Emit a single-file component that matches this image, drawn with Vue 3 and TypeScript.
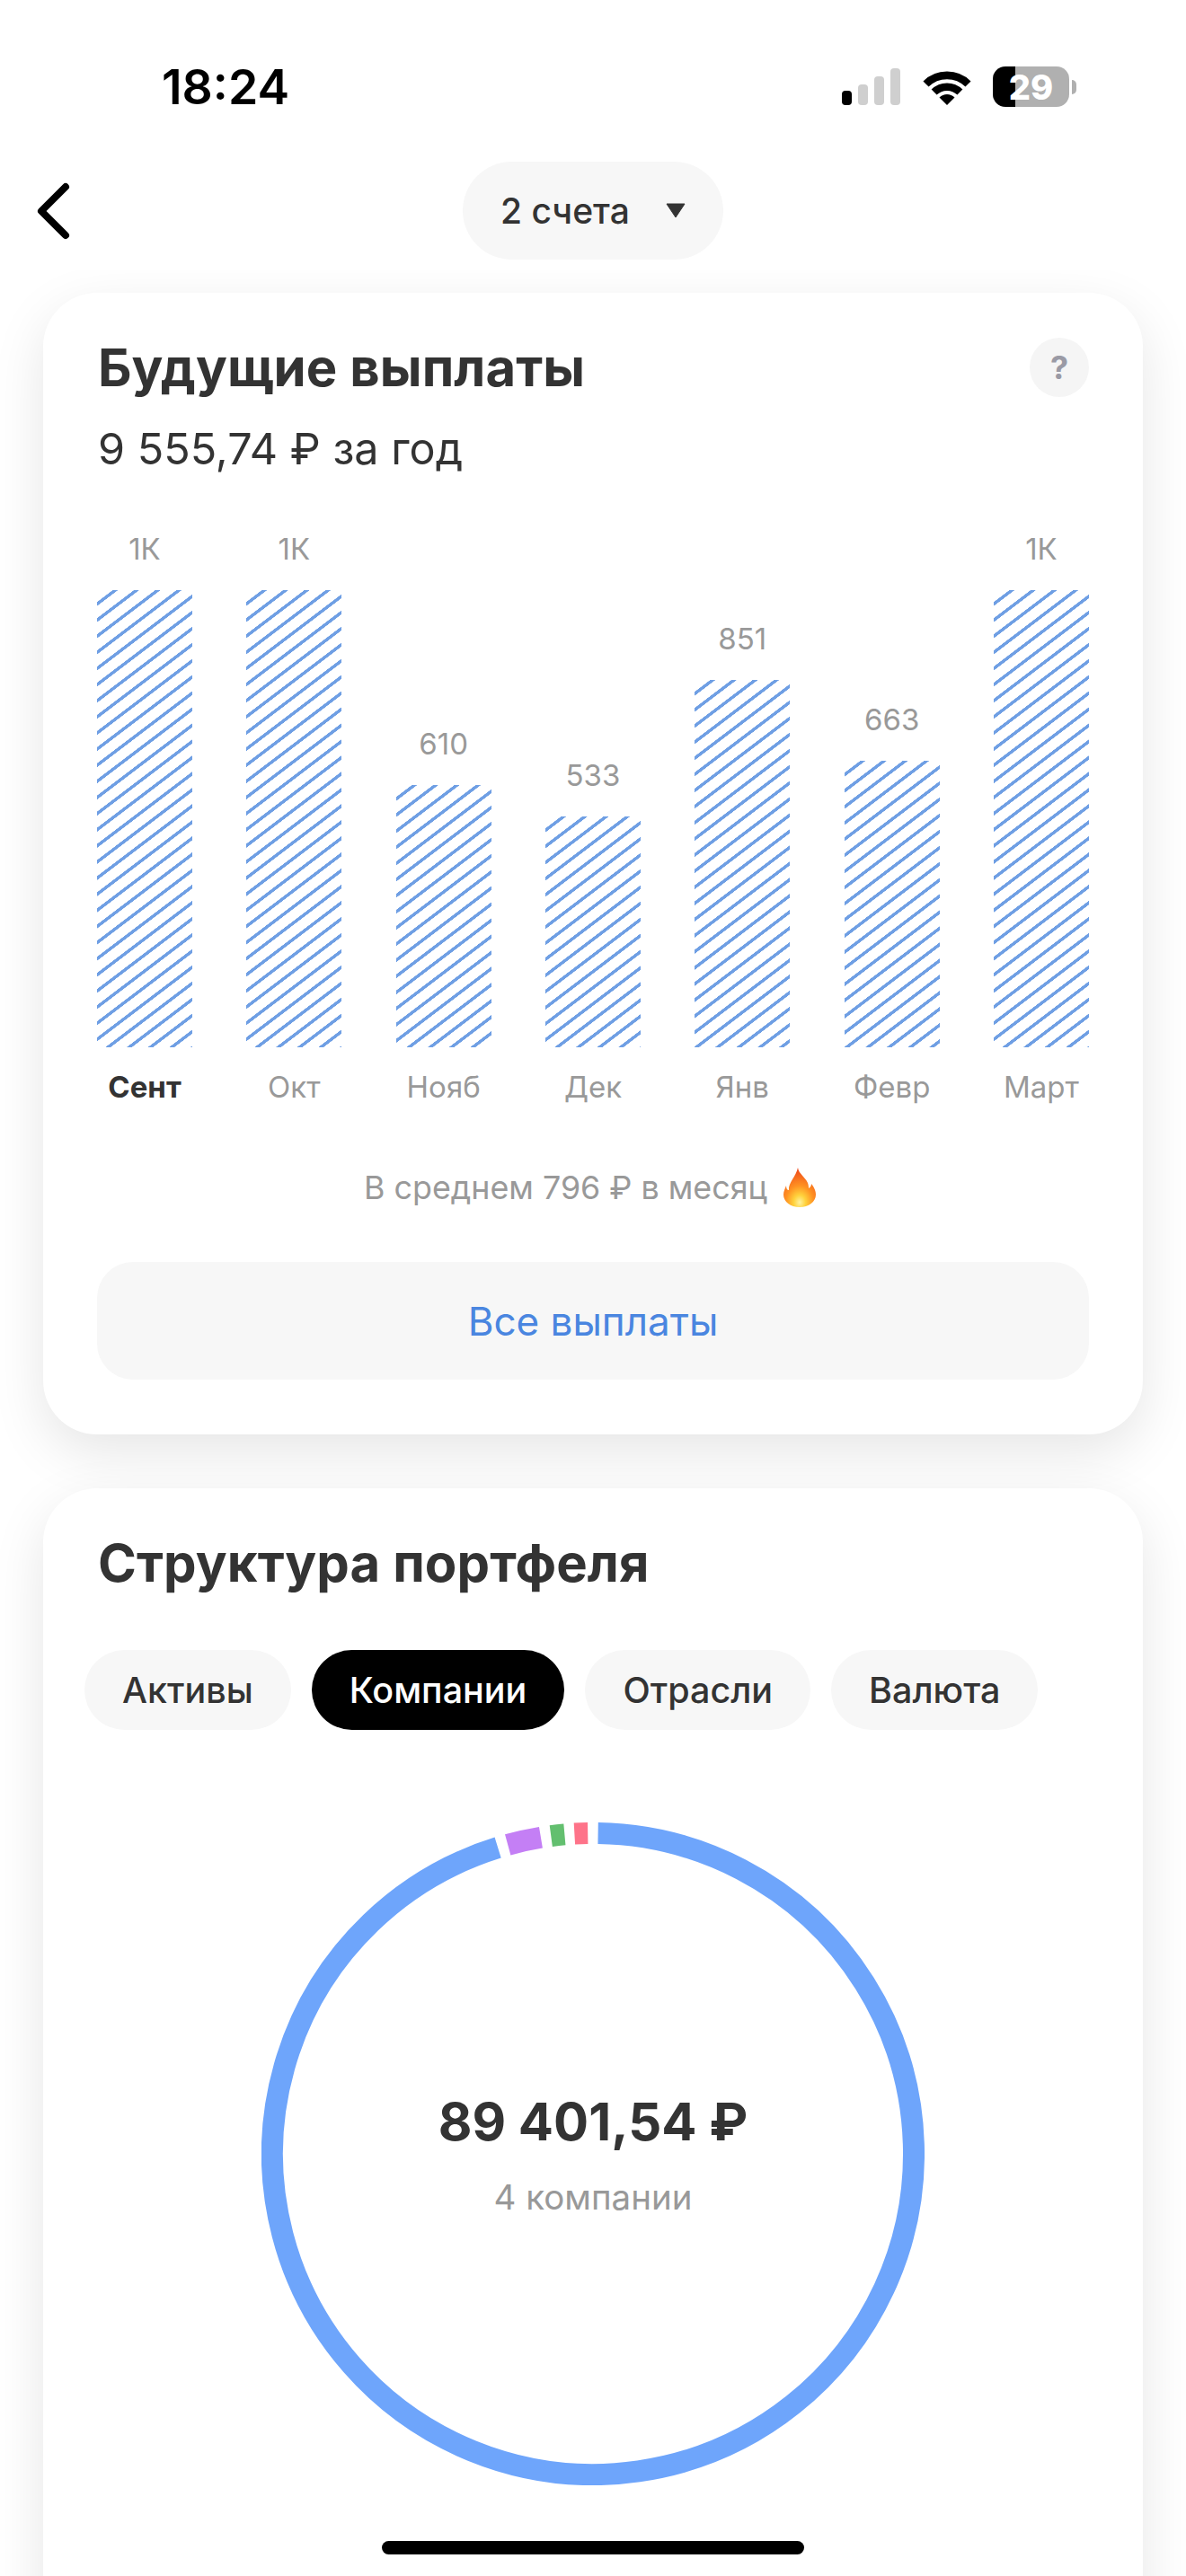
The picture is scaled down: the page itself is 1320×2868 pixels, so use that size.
<template>
  <div class="screen">
    <header class="top">
      <!-- Status bar -->
      <div class="status-bar">
        <span class="time">18:24</span>
        <div class="status-icons">
          <div class="signal">
            <i v-for="(h, idx) in signalBars" :key="h" :class="{ on: idx === 0 }" :style="{ height: h + 'px' }"></i>
          </div>
          <svg class="wifi" width="58" height="42" viewBox="0 0 58 42">
            <path d="M29 42 L20.5 33.5 A12 12 0 0 1 37.5 33.5 Z" fill="#000" />
            <path d="M14.6 27.6 A20.5 20.5 0 0 1 43.4 27.6" fill="none" stroke="#000" stroke-width="8.4" />
            <path d="M5.5 18.5 A33.4 33.4 0 0 1 52.5 18.5" fill="none" stroke="#000" stroke-width="8.6" />
          </svg>
          <div class="battery"><span>29</span></div>
          <div class="battery-cap"></div>
        </div>
      </div>

      <!-- Nav -->
      <div class="nav">
        <svg class="back" width="38" height="64" viewBox="0 0 38 64">
          <path d="M33 5 L6 32 L33 59" fill="none" stroke="#000" stroke-width="8" stroke-linecap="round" stroke-linejoin="round" />
        </svg>
        <div class="account-pill">
          <span>2 счета</span>
          <svg width="22" height="17" viewBox="0 0 22 17"><path d="M1 1 H21 L11 16 Z" fill="#333" stroke="#333" stroke-linejoin="round" /></svg>
        </div>
      </div>
    </header>

    <main class="content">
      <!-- Future payouts -->
      <section class="card payouts">
        <div class="card-head">
          <h2 class="card-title">Будущие выплаты</h2>
          <div class="help">?</div>
        </div>
        <div class="year-sum">9 555,74 ₽ за год</div>

        <div class="chart">
          <div v-for="bar in bars" :key="bar.month" class="chart-col">
            <span class="bar-value">{{ bar.value }}</span>
            <div class="bar" :style="{ height: bar.height + 'px' }"></div>
          </div>
        </div>
        <div class="months">
          <span v-for="(bar, idx) in bars" :key="bar.month" class="month" :class="{ current: idx === 0 }">{{ bar.month }}</span>
        </div>

        <div class="average">
          <span>В среднем 796 ₽ в месяц</span>
          <svg width="36" height="44" viewBox="0 0 36 44">
            <defs>
              <radialGradient id="flame" cx="50%" cy="88%" r="85%">
                <stop offset="0" stop-color="#fff3a0" />
                <stop offset="0.22" stop-color="#ffd23c" />
                <stop offset="0.5" stop-color="#ff9222" />
                <stop offset="1" stop-color="#ee4a1c" />
              </radialGradient>
            </defs>
            <path d="M16 0 C17 7 24 10 27 17 C28 20 28 22 28 23 C30 22 31 20 31 18 C35 23 36 27 36 30 C36 38 28 44 18 44 C8 44 0 38 0 30 C0 26 2 23 3 20 C3 23 4 25 6 25 C5 17 14 10 16 0 Z" fill="url(#flame)" />
          </svg>
        </div>

        <button class="all-btn">Все выплаты</button>
      </section>

      <!-- Portfolio structure -->
      <section class="card structure">
        <h2 class="card-title">Структура портфеля</h2>
        <div class="tabs">
          <div v-for="tab in tabs" :key="tab" class="tab" :class="{ active: tab === 'Компании' }">{{ tab }}</div>
        </div>
        <div class="donut">
          <svg width="738" height="738" viewBox="0 0 738 738">
            <path
              v-for="seg in segments"
              :key="seg.color"
              :d="arcPath(seg.from, seg.to)"
              :stroke="seg.color"
              fill="none"
              stroke-width="24"
            />
          </svg>
          <div class="donut-center">
            <div class="donut-sum">89 401,54 ₽</div>
            <div class="donut-sub">4 компании</div>
          </div>
        </div>
      </section>
    </main>

    <div class="home-indicator"></div>
  </div>
</template>

<script setup lang="ts">
interface Bar {
  month: string
  value: string
  height: number
}

const signalBars = [16, 23, 32, 41]

const bars: Bar[] = [
  { month: 'Сент', value: '1К', height: 509 },
  { month: 'Окт', value: '1К', height: 509 },
  { month: 'Нояб', value: '610', height: 292 },
  { month: 'Дек', value: '533', height: 257 },
  { month: 'Янв', value: '851', height: 409 },
  { month: 'Февр', value: '663', height: 319 },
  { month: 'Март', value: '1К', height: 509 }
]

const tabs = ['Активы', 'Компании', 'Отрасли', 'Валюта']

// Angles in degrees, clockwise from 12 o'clock
const segments = [
  { color: '#6ea5fb', from: 0.9, to: 342.75 },
  { color: '#c47ff5', from: 344.6, to: 350.64 },
  { color: '#63bf6f', from: 352.48, to: 354.92 },
  { color: '#fe7389', from: 356.69, to: 359.07 }
]

const arcPath = (from: number, to: number) => {
  const r = 357
  const c = 369
  const point = (deg: number) => {
    const a = (deg * Math.PI) / 180
    return `${(c + r * Math.sin(a)).toFixed(2)} ${(c - r * Math.cos(a)).toFixed(2)}`
  }
  const large = to - from > 180 ? 1 : 0
  return `M ${point(from)} A ${r} ${r} 0 ${large} 1 ${point(to)}`
}
</script>

<style>
html,
body {
  margin: 0;
  background: #fff;
}
</style>

<style scoped>
.screen {
  position: relative;
  width: 1320px;
  height: 2868px;
  overflow: hidden;
  background: #fff;
  font-family: Inter, 'Noto Sans', sans-serif;
  color: #333;
}

.top {
  position: relative;
  z-index: 2;
  height: 301px;
  background: #fff;
}

.status-bar {
  height: 180px;
  display: flex;
  justify-content: space-between;
  padding: 68px 122px 0 180px;
  box-sizing: border-box;
}

.time {
  font-size: 53.5px;
  font-weight: 600;
  line-height: 58px;
  color: #000;
}

.status-icons {
  display: flex;
  align-items: flex-start;
  padding-top: 6px;
}

.signal {
  display: flex;
  align-items: flex-end;
  gap: 7px;
  height: 41px;
  margin-top: 2px;
  margin-right: 23px;
}

.signal i {
  width: 11px;
  border-radius: 4px;
  background: #cfcfcf;
}

.signal i.on {
  background: #000;
}

.wifi {
  margin-top: 1px;
  margin-right: 22px;
}

.battery {
  width: 85px;
  height: 45px;
  border-radius: 14px;
  background: linear-gradient(90deg, #000 29%, #b0b0b0 29%);
  display: flex;
  align-items: center;
  justify-content: center;
  color: #fff;
  font-size: 38px;
  font-weight: 800;
}

.battery-cap {
  width: 5px;
  height: 16px;
  margin: 15px 0 0 3px;
  border-radius: 0 5px 5px 0;
  background: #b0b0b0;
}

.nav {
  display: grid;
  grid-template-columns: 1fr auto 1fr;
  align-items: center;
  height: 109px;
}

.back {
  margin-left: 40px;
}

.account-pill {
  width: 290px;
  height: 109px;
  box-sizing: border-box;
  padding: 0 42px;
  border-radius: 55px;
  background: #f7f7f7;
  display: flex;
  align-items: center;
  justify-content: space-between;
  font-size: 39px;
  font-weight: 500;
}

.content {
  padding: 25px 48px 0;
}

.card {
  background: #fff;
  border-radius: 60px;
  padding: 50px 60px 61px;
  box-shadow: 0 20px 60px rgba(0, 0, 0, 0.1);
}

.card + .card {
  margin-top: 60px;
}

.structure {
  padding-bottom: 240px;
}

.card-head {
  display: flex;
  justify-content: space-between;
  align-items: center;
  height: 66px;
}

.card-title {
  margin: 0 0 0 1px;
  font-size: 58px;
  line-height: 66px;
  font-weight: 700;
  letter-spacing: 0.1px;
  color: #333;
}

.help {
  width: 66px;
  height: 66px;
  border-radius: 50%;
  background: #f5f5f5;
  display: flex;
  align-items: center;
  justify-content: center;
  color: #9a9aa5;
  font-size: 36px;
  font-weight: 700;
}

.year-sum {
  margin: 28px 0 0 1px;
  font-size: 48.5px;
  line-height: 60px;
}

.chart {
  display: flex;
  justify-content: space-between;
  align-items: flex-end;
  height: 636px;
}

.chart-col {
  width: 106px;
  display: flex;
  flex-direction: column;
  align-items: center;
}

.bar-value {
  font-size: 33px;
  line-height: 40px;
  margin-bottom: 26px;
  color: #999;
}

.bar {
  width: 100%;
  background: repeating-linear-gradient(
    142.8deg,
    #fff 0,
    #fff 10.4px,
    #6f9fe4 10.8px,
    #6f9fe4 13.9px,
    #fff 14.3px
  );
}

.months {
  display: flex;
  justify-content: space-between;
  margin-top: 24px;
}

.month {
  width: 106px;
  text-align: center;
  font-size: 33px;
  line-height: 40px;
  color: #999;
  white-space: nowrap;
}

.month.current {
  font-weight: 700;
  color: #333;
}

.average {
  display: flex;
  justify-content: center;
  align-items: center;
  gap: 18px;
  margin-top: 68px;
  padding-right: 7px;
  height: 48px;
  font-size: 35.8px;
  color: #999;
}

.all-btn {
  display: block;
  width: 100%;
  height: 131px;
  margin-top: 59px;
  border: none;
  border-radius: 40px;
  background: #f7f7f7;
  font-family: inherit;
  font-size: 44px;
  color: #4a86e0;
}

.tabs {
  display: flex;
  gap: 23px;
  margin: 64px 0 0 -14px;
}

.tab {
  height: 89px;
  padding: 0 42px;
  border-radius: 45px;
  background: #f7f7f7;
  display: flex;
  align-items: center;
  font-size: 39.5px;
  font-weight: 500;
  color: #333;
}

.tab.active {
  background: #000;
  color: #fff;
}

.donut {
  display: grid;
  justify-content: center;
  margin-top: 103px;
}

.donut > * {
  grid-area: 1 / 1;
}

.donut-center {
  display: flex;
  flex-direction: column;
  align-items: center;
  justify-content: center;
}

.donut-sum {
  font-size: 58px;
  line-height: 66px;
  font-weight: 700;
}

.donut-sub {
  margin-top: 29px;
  font-size: 38.5px;
  line-height: 44px;
  color: #999;
}

.home-indicator {
  position: absolute;
  left: 425px;
  bottom: 24px;
  width: 470px;
  height: 15px;
  border-radius: 8px;
  background: #000;
  z-index: 3;
}
</style>
